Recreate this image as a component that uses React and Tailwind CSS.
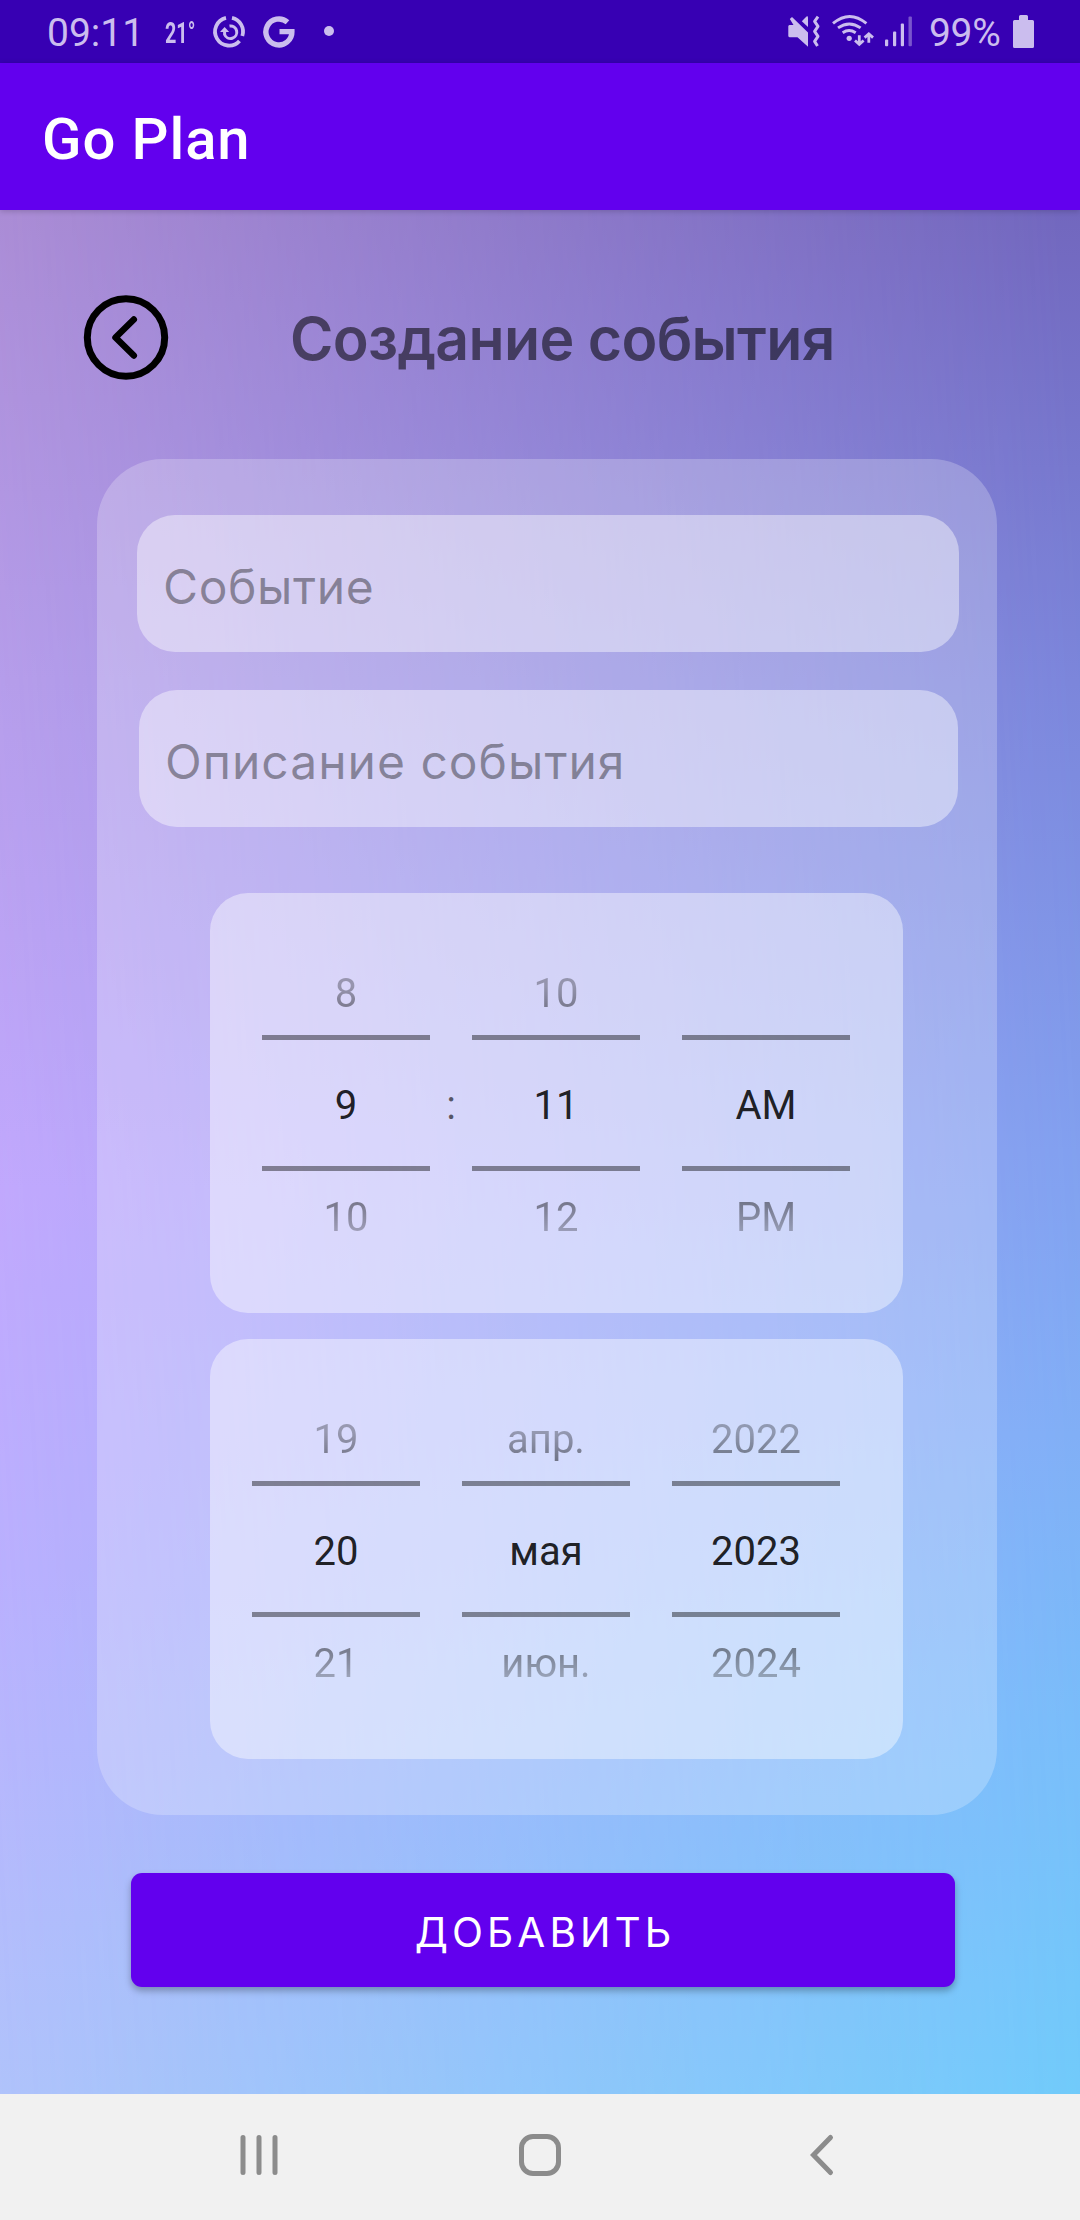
import React from "react";

const INK = "#cbbdee";

function StatusBar() {
  return (
    <div className="flex h-[63px] items-center bg-[#3700b3] pl-[47px] text-[#cbbdee]">
      <span className="w-[118px] pt-[4px] text-[39px] leading-none whitespace-nowrap">09:11</span>
      <span className="w-[43px] origin-left scale-x-[0.66] pt-[2px] text-[30px] leading-none font-bold whitespace-nowrap">21°</span>
      <svg width="140" height="63" viewBox="208 0 140 63" fill="none" stroke={INK}>
        <path d="M226 17.9 A14 14 0 1 0 239.5 40.9" strokeWidth="3.8" />
        <path d="M232 17.9 A14 14 0 0 1 242.3 36" strokeWidth="3.8" />
        <path d="M229.5 26 A6.3 6.3 0 1 1 224.6 34.5 V31" strokeWidth="3" />
        <path d="M220 32 L224.6 27 L229.2 32 Z" fill={INK} stroke="none" />
        <path d="M287.5 22.2 A13 13 0 1 0 291.9 31.6 H279.5" strokeWidth="5.4" />
        <circle cx="329" cy="31" r="5" fill={INK} stroke="none" />
      </svg>
      <svg className="ml-auto" width="132" height="63" viewBox="784 0 132 63" fill="none" stroke={INK}>
        <path d="M789.5 25 H793.5 L789.8 19 L792 17 L808 32.5 V46.7 L797.5 37.3 H789.5 Q788.3 37 788.3 36 V26.3 Q788.3 25.2 789.5 25 Z" fill={INK} stroke="none" />
        <path d="M801.8 21.3 L806.5 16.5 Q808 15.7 808 17.5 V27 Z" fill={INK} stroke="none" />
        <path d="M818 16.7 L814.6 21.3 L818 26.3 L814.6 31.3 L818 36.4 L814.6 41.4 L817.5 46" strokeWidth="3" strokeLinejoin="round" />
        <path d="M833 23.4 Q849.7 9.4 866.4 23.4 M838 27.9 Q849.3 19.9 860.6 27.9 M842.7 32.7 Q849 28.4 855.7 32.7" strokeWidth="2.9" />
        <circle cx="849.2" cy="38.3" r="2.6" fill={INK} stroke="none" />
        <path d="M859.3 35.3 V44 M855 40.5 L859.3 44.3 L863.6 40.5 M868.8 42.7 V34 M864.6 37.6 L868.8 33.8 L873 37.6" strokeWidth="2.8" />
        <g fill={INK} stroke="none">
          <rect x="885" y="39.5" width="3.2" height="6.7" rx="1" />
          <rect x="893" y="31.5" width="3.2" height="14.7" rx="1" />
          <rect x="900.8" y="23.5" width="3.2" height="22.7" rx="1" />
          <rect x="908.5" y="16.5" width="3.4" height="29.7" rx="1" opacity="0.45" />
        </g>
      </svg>
      <span className="ml-[13px] w-[84px] pt-[4px] text-[39px] leading-none tracking-[-0.3px] whitespace-nowrap">99%</span>
      <svg className="mr-[46px]" width="21" height="63" viewBox="1013 0 21 63">
        <path d="M1019 20 V16.5 Q1019 15 1020.5 15 H1026.5 Q1028 15 1028 16.5 V20 H1032.5 Q1034 20 1034 21.5 V46.5 Q1034 48 1032.5 48 H1014.5 Q1013 48 1013 46.5 V21.5 Q1013 20 1014.5 20 Z" fill={INK} />
      </svg>
    </div>
  );
}

function Field({ label, className }) {
  return (
    <div className={"flex h-[137px] items-center rounded-[38px] bg-white/42 font-['Inter',sans-serif] text-[48px] leading-none text-black/38 whitespace-nowrap " + className}>
      {label}
    </div>
  );
}

function Wheel({ items }) {
  return (
    <div className="flex w-[168px] flex-col items-center">
      <span className="h-[75px] bg-linear-to-b from-black/30 from-35% to-black/50 to-80% bg-clip-text leading-[67px] text-transparent">{items[0]}</span>
      <div className="h-[5px] w-full bg-black/42" />
      <div className="h-[126px] leading-[131px] text-black/87">{items[1]}</div>
      <div className="h-[5px] w-full bg-black/42" />
      <span className="h-[75px] bg-linear-to-b from-black/50 from-30% to-black/25 to-85% bg-clip-text leading-[93px] text-transparent">{items[2]}</span>
    </div>
  );
}

function Picker({ wheels, separator, className }) {
  return (
    <div className={"flex h-[420px] w-[693px] rounded-[38px] bg-white/42 pt-[67px] text-[40px] whitespace-nowrap " + className}>
      <Wheel items={wheels[0]} />
      <div className="w-[42px] pt-[80px] text-center leading-[131px] text-black/60">{separator}</div>
      <Wheel items={wheels[1]} />
      <div className="w-[42px]" />
      <Wheel items={wheels[2]} />
    </div>
  );
}

function NavBar() {
  return (
    <div className="flex h-[126px] items-center bg-[#f1f1f1] pb-[4px] pl-[238px]">
      <svg width="42" height="46" viewBox="238 2132 42 46" stroke="#8c8c8c" strokeWidth="5" strokeLinecap="round">
        <path d="M243 2137.5 V2172.5 M259 2137.5 V2172.5 M275 2137.5 V2172.5" />
      </svg>
      <svg className="ml-[237px]" width="46" height="46" viewBox="517 2132 46 46" fill="none" stroke="#8c8c8c" strokeWidth="5">
        <rect x="521.5" y="2136.5" width="37" height="37" rx="11.5" />
      </svg>
      <svg className="ml-[243px]" width="32" height="46" viewBox="806 2132 32 46" fill="none" stroke="#8c8c8c" strokeWidth="5" strokeLinecap="round" strokeLinejoin="miter">
        <path d="M830.5 2137.5 L813.5 2155 L830.5 2172.5" />
      </svg>
    </div>
  );
}

export default function App() {
  return (
    <div className="flex h-[2220px] w-[1080px] flex-col overflow-hidden font-['Roboto',sans-serif]">
      <StatusBar />
      <div className="z-10 h-[147px] bg-[#6200ee] pt-[44px] pl-[42px] text-[58px] leading-[64px] font-medium tracking-[0.9px] text-white shadow-[0_1px_6px_rgba(0,0,0,0.2)]">Go Plan</div>
      <main className="relative isolate flex h-[1884px] flex-col bg-[linear-gradient(180deg,#b090d8_0%,#ba9fec_25%,#c4a9fe_52%,#bcb0fe_72%,#b0c3fb_100%)]">
        <div className="absolute inset-0 -z-10 bg-[linear-gradient(180deg,#7267be_0%,#7b86db_25%,#80a0ef_50%,#7eaff6_65%,#76bdfa_80%,#6ccbfa_100%)] [mask-image:linear-gradient(87deg,transparent_0%,black_98%)]" />
        <div className="flex h-[249px] items-start pt-[84px] pl-[83px]">
          <svg width="86" height="86" viewBox="83 294.5 86 86" fill="none" stroke="#000" strokeLinecap="round" strokeLinejoin="round">
            <circle cx="126" cy="338" r="38.7" strokeWidth="7" />
            <path d="M133.8 320 L115.5 338 L133.8 356" strokeWidth="6.5" />
          </svg>
          <h1 className="ml-[121px] pt-[10px] font-['Inter',sans-serif] text-[59px] leading-[70px] font-semibold tracking-[-0.7px] text-black/54 whitespace-nowrap">Создание события</h1>
        </div>
        <section className="ml-[97px] h-[1356px] w-[900px] rounded-[66px] bg-white/23 pt-[56px]">
          <Field label="Событие" className="ml-[40px] w-[822px] pt-[6px] pl-[26px] tracking-[0.6px]" />
          <Field label="Описание события" className="mt-[38px] ml-[42px] w-[819px] pt-[6px] pl-[26px] tracking-[1px]" />
          <Picker className="mt-[66px] ml-[113px] pl-[52px]" separator=":" wheels={[["8", "9", "10"], ["10", "11", "12"], ["", "AM", "PM"]]} />
          <Picker className="mt-[26px] ml-[113px] pl-[42px]" wheels={[["19", "20", "21"], ["апр.", "мая", "июн."], ["2022", "2023", "2024"]]} />
        </section>
        <button className="mt-[58px] ml-[131px] h-[114px] w-[824px] rounded-[11px] bg-[#6200ee] pt-[7px] pl-[4px] font-['Inter',sans-serif] text-[40.5px] leading-none tracking-[4.1px] text-white shadow-[0_4px_7px_rgba(0,0,0,0.28)]">ДОБАВИТЬ</button>
      </main>
      <NavBar />
    </div>
  );
}
